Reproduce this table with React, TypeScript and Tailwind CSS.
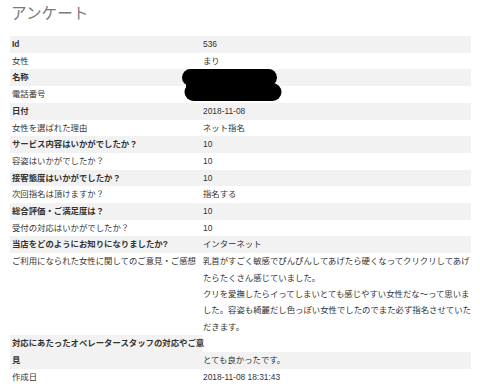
import React from "react";

type RowProps = { label: React.ReactNode; value?: React.ReactNode; gray: boolean };

function Row({ label, value, gray }: RowProps) {
  return (
    <div className={`flex ${gray ? "bg-[#f2f2f2]" : ""}`}>
      <div className={`w-[193px] shrink-0 pl-[2px] ${gray ? "font-bold" : ""}`}>{label}</div>
      <div className="flex-1">{value}</div>
    </div>
  );
}

export default function App() {
  const rows: [string, React.ReactNode][] = [
    ["Id", "536"],
    ["女性", "まり"],
    ["名称", ""],
    ["電話番号", ""],
    ["日付", "2018-11-08"],
    ["女性を選ばれた理由", "ネット指名"],
    ["サービス内容はいかがでしたか？", "10"],
    ["容姿はいかがでしたか？", "10"],
    ["接客態度はいかがでしたか？", "10"],
    ["次回指名は頂けますか？", "指名する"],
    ["総合評価・ご満足度は？", "10"],
    ["受付の対応はいかがでしたか？", "10"],
    ["当店をどのようにお知りになりましたか?", "インターネット"],
  ];
  return (
    <div className="w-[480px] h-[386px] overflow-hidden bg-white px-[10px] text-[#333] font-['Liberation_Sans','Noto_Sans_CJK_JP',sans-serif]">
      <div className="h-[36px] pt-[4px] pl-[1px] text-[15.6px] leading-[20px] text-[#7a7a7a]">アンケート</div>
      <div className="relative w-[461px] text-[8.4px] leading-[16.7px]">
        {rows.map(([l, v], i) => (
          <Row key={i} label={l} value={v} gray={i % 2 === 0} />
        ))}
        <div className="flex">
          <div className="w-[193px] shrink-0 pl-[2px]">ご利用になられた女性に関してのご意見・ご感想</div>
          <div className="flex-1 leading-[16.4px]">
            乳首がすごく敏感でぴんぴんしてあげたら硬くなってクリクリしてあげたらたくさん感じていました。
            <br />
            クリを愛撫したらイってしまいとても感じやすい女性だな～って思いました。容姿も綺麗だし色っぽい女性でしたのでまた必ず指名させていただきます。
          </div>
        </div>
        <div className="flex">
          <div className="relative z-10 w-[193px] shrink-0 pl-[2px] bg-[#f2f2f2] font-bold whitespace-nowrap">
            対応にあたったオペレータースタッフの対応やご意
            <br />
            見
          </div>
          <div className="flex-1 flex flex-col">
            <div className="h-[16.7px]"></div>
            <div className="bg-[#f2f2f2]">とても良かったです。</div>
          </div>
        </div>
        <Row label="作成日" value="2018-11-08 18:31:43" gray={false} />
        <svg
          className="absolute left-[172px] top-[33px]"
          width="100"
          height="33"
          viewBox="0 0 100 33"
        >
          <rect x="0" y="0" width="95" height="17" rx="8.5" fill="#000" />
          <rect x="2.5" y="14" width="97" height="18" rx="9" fill="#000" />
          <rect x="4" y="10" width="88" height="10" fill="#000" />
        </svg>
      </div>
    </div>
  );
}
